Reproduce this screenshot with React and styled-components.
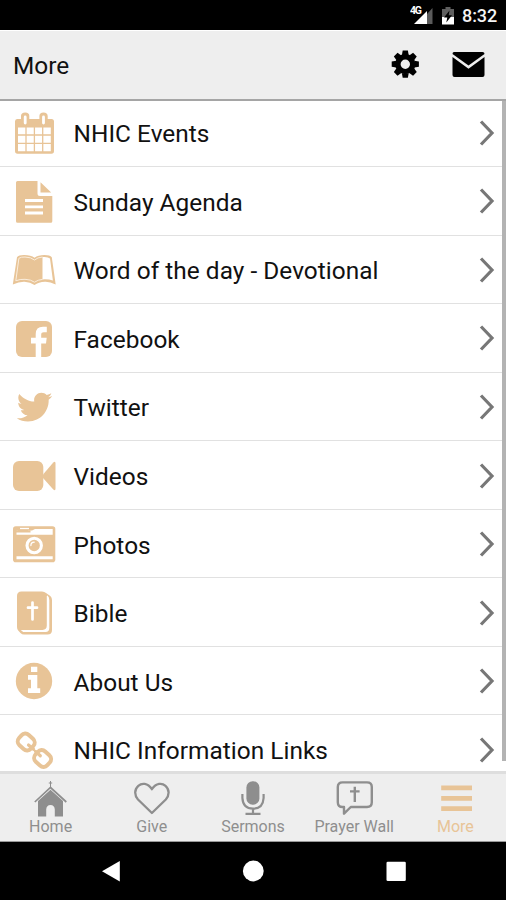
import React from "react";
import styled, { createGlobalStyle } from "styled-components";
import { FaTwitter } from "react-icons/fa";

const TAN = "#e8c497";
const GREY = "#8e8e8e";

const GlobalStyle = createGlobalStyle`
  *, *::before, *::after { box-sizing: border-box; }
  body { margin: 0; background: #000; font-family: Roboto, "Liberation Sans", sans-serif; }
`;

const Screen = styled.div`
  display: flex;
  flex-direction: column;
  height: 900px;
  overflow: hidden;
  background: #fff;
`;

const StatusBar = styled.div`
  display: flex;
  flex: none;
  align-items: center;
  justify-content: flex-end;
  height: 30px;
  padding: 2px 9px 0 0;
  background: #000;
`;

const StatusIcons = styled.svg`
  width: 50px;
  height: 28px;
  margin-right: 2px;
`;

const Clock = styled.span`
  width: 35px;
  color: #f4f4f4;
  font-size: 18px;
  font-weight: 500;
  letter-spacing: -0.1px;
  line-height: 28px;
  white-space: nowrap;
`;

const Header = styled.header`
  display: flex;
  flex: none;
  align-items: center;
  height: 70.5px;
  padding: 0 21px 0 13px;
  background: #eee;
  border-top: 1px solid #fff;
  border-bottom: 2px solid #a5a5a5;
`;

const Title = styled.h1`
  flex: 1;
  margin: 2px 0 0;
  color: #111;
  font-size: 24.4px;
  font-weight: 400;
`;

const HeaderIcon = styled.svg`
  width: ${(p) => p.$width}px;
  height: 30px;
  margin-top: -1px;
  margin-left: ${(p) => p.$gap || 0}px;
`;

const ListArea = styled.main`
  display: flex;
  flex: 1;
  min-height: 0;
  overflow: hidden;
`;

const List = styled.ul`
  flex: 1;
  margin: -2px 0 0;
  padding: 0;
  list-style: none;
`;

const Row = styled.li`
  display: flex;
  align-items: center;
  height: 68.56px;
  padding-right: 11px;
  border-bottom: 1.5px solid #e1e1e1;
`;

const RowIcon = styled.svg`
  flex: none;
  width: 73.5px;
  height: 68px;
  margin-top: 1.5px;
  color: ${TAN};
`;

const RowLabel = styled.span`
  flex: 1;
  padding-top: 3px;
  color: #111;
  font-size: 24.4px;
  letter-spacing: 0.04px;
  white-space: nowrap;
`;

const Chevron = styled.svg`
  flex: none;
  width: 16px;
  height: 28px;
  margin-top: 1px;
`;

const ScrollThumb = styled.div`
  width: 4px;
  height: 660px;
  margin-left: -4px;
  background: #b3b3b3;
  z-index: 1;
`;

const TabBar = styled.nav`
  display: grid;
  flex: none;
  grid-template-columns: repeat(5, 1fr);
  height: 71.5px;
  background: #eee;
  border-top: 3px solid #dedede;
  border-bottom: 1px solid #999;
`;

const Tab = styled.div`
  display: flex;
  flex-direction: column;
  align-items: center;
  padding-top: 4.5px;
  color: ${(p) => (p.$active ? TAN : GREY)};
`;

const TabIcon = styled.svg`
  width: 44px;
  height: 39px;
`;

const TabLabel = styled.span`
  font-size: 16px;
  line-height: 19px;
  white-space: nowrap;
`;

const SystemNav = styled.div`
  flex: none;
  height: 58px;
  background: #000;
`;

const SystemButtons = styled.svg`
  display: block;
  width: 506px;
  height: 58px;
`;

const CalendarGlyph = () => (
  <g>
    <path
      fill="currentColor"
      fillRule="evenodd"
      d="M17 20H21V17Q21 13.5 25.2 13.5T29.3 17V20H39.4V17Q39.4 13.5 43.5 13.5T47.7 17V20H51.5Q54 20 54 22.5V52Q54 54.8 51.5 54.8H17.5Q15 54.8 15 52V22.5Q15 20 17 20ZM18 28.5V52.2H50.8V28.5Z"
    />
    <path stroke="#fff" strokeWidth="2.8" strokeLinecap="round" d="M25.2 18V24M43.5 18V24" />
    <path stroke="currentColor" strokeWidth="1.3" d="M26 28V53M34.4 28V53M42.7 28V53M17 36H52M17 44.3H52" />
  </g>
);

const DocumentGlyph = () => (
  <g>
    <path
      fill="currentColor"
      d="M17.5 13H37.5V25.5Q37.5 28 40 28H52.3V53.2Q52.3 54.8 50.8 54.8H17.5Q16 54.8 16 53.2V14.5Q16 13 17.5 13ZM40.5 14.3L51.2 24.6H40.5Z"
    />
    <path stroke="#fff" strokeWidth="2.8" d="M25 32.5H43M25 38.8H43M25 45H43" />
  </g>
);

const BookGlyph = () => (
  <g>
    <path
      fill="currentColor"
      d="M17 21.2Q18.5 19 24 19Q31 19 34.5 21.8Q38 19 44.5 19Q50 19 51.8 21.2L55.7 48.5Q50 45.5 45 45.7Q38.5 46 34.5 49Q30.5 46 24.5 45.7Q19 45.5 12.8 48.5Z"
    />
    <path
      fill="none"
      stroke="#fbeedd"
      strokeWidth="1"
      d="M15.8 44.8L18.9 22.3Q21 20.8 25 21Q31 21.2 34.5 24Q37.5 21.4 42.5 21M15.8 44.8Q20 43 25 43.3Q31 43.5 34.5 46.2Q38 43.7 42.5 43.4"
    />
    <path fill="#fff" d="M42.5 21Q48 20.5 50 22.5L52.9 44.6Q48.5 43 42.5 43.4Z" />
  </g>
);

const FacebookGlyph = () => (
  <g>
    <rect x="16" y="16" width="36" height="36" rx="6" fill="currentColor" />
    <path fill="#fff" d="M35.7 52V38.4H31V32.8H35.7V29Q35.7 21.7 43 21.7H46.8V27.2H43.8Q41.2 27.2 41.2 29.6V32.8H46.7L46 38.4H41.2V52Z" />
  </g>
);

const TwitterGlyph = () => <FaTwitter x="16.8" y="16.3" size="35.5" />;

const VideoGlyph = () => (
  <g fill="currentColor">
    <rect x="13" y="19" width="30.3" height="30" rx="6" />
    <path d="M43 32.5L53.3 20.5Q55.5 18.7 55.5 21.5V46.5Q55.5 49.2 53.3 47.5L43 36Z" />
  </g>
);

const CameraGlyph = () => (
  <g>
    <rect x="13" y="16.2" width="42.3" height="36" rx="2.8" fill="currentColor" />
    <path fill="#fff" d="M16.5 22V20.6H32L35 19H52.7V24.8H16.5Z" />
    <path fill="currentColor" d="M16 22.5V20.2H18V18H28V20.2H30.5V22.5Z" />
    <path stroke="#fff" strokeWidth="1.3" d="M20 18.5H29" />
    <circle cx="34.2" cy="35.5" r="7.2" fill="none" stroke="#fff" strokeWidth="3.1" />
    <path d="M30.9 35.5Q30.9 32.2 34.2 32.2" fill="none" stroke="#fff" strokeWidth="1.3" strokeLinecap="round" />
    <path stroke="#fff" strokeWidth="3" d="M16.5 47.8H52.7" />
  </g>
);

const BibleGlyph = () => (
  <g>
    <path
      fill="currentColor"
      d="M21.5 12.5H42Q44.5 12.5 46 14L50.3 17Q52 18.5 52 21V51Q52 55.5 47.5 55.5H24Q22 55.5 20.5 54L18.2 51.5Q17 50.3 17 48V17Q17 12.5 21.5 12.5Z"
    />
    <path d="M47.6 16.5Q49.3 18 49.3 21V49Q49.3 53 45.5 53H23.2L20.8 50.9H42.5Q46.8 50.9 46.8 46.5V17Z" fill="#fff" />
    <path stroke="#fff" strokeWidth="2.7" strokeLinecap="round" d="M32.5 23.5V40.5M28 28.7H37" />
  </g>
);

const InfoGlyph = () => (
  <g>
    <circle cx="34" cy="34" r="18.2" fill="currentColor" />
    <path fill="#fff" d="M31 19.8H37.3V25H31ZM28 28H37.3V41.3H40.2V46H28V41.3H31V32.7H28Z" />
  </g>
);

const LinkGlyph = () => (
  <g fill="none" stroke="currentColor" strokeWidth="4">
    <rect x="-8" y="-7" width="16" height="14" rx="5.2" transform="translate(26.2 26) rotate(42)" />
    <rect x="-8" y="-7" width="16" height="14" rx="5.2" transform="translate(42.6 42.5) rotate(42)" />
    <path strokeWidth="3.2" strokeLinecap="round" d="M28.5 29L33.5 33.3M35.5 35.4L40.3 39.8" />
  </g>
);

const HomeGlyph = () => (
  <g>
    <path fill="none" stroke={GREY} strokeWidth="1.7" d="M5.8 24L21.5 9.5L37.3 24" />
    <path stroke={GREY} strokeWidth="1" d="M21.5 3V10M19.8 5H23.2" />
    <path fill={GREY} d="M21.5 11.8L34 23V38.5H25.8V31.5Q25.5 27 21.5 27T17.2 31.5V38.5H9V23Z" />
  </g>
);

const HeartGlyph = () => (
  <path
    fill="none"
    stroke={GREY}
    strokeWidth="2.3"
    strokeLinejoin="round"
    d="M21.9 11.2C17.5 4.8 11.8 4.8 8.3 7.8C4 11.6 4.4 17.3 8 21.5L21.9 35L35.8 21.5C39.4 17.3 39.8 11.6 35.5 7.8C32 4.8 26.3 4.8 21.9 11.2Z"
  />
);

const MicGlyph = () => (
  <g>
    <rect x="15.4" y="3.2" width="13" height="23.5" rx="6.3" fill={GREY} />
    <path fill="none" stroke={GREY} strokeWidth="2.2" d="M11.4 16V20Q12 30.7 22 30.7T32.6 20V16M22 31V36M14.5 35.8H29.5" />
  </g>
);

const PrayerGlyph = () => (
  <g fill="none" stroke={GREY} strokeWidth="2.4">
    <path strokeLinejoin="round" d="M10.5 4.4H35Q39.8 4.4 39.8 9V24.3Q39.8 29 35 29H18.8L12 35.7V29H10.5Q5.8 29 5.8 24.3V9Q5.8 4.4 10.5 4.4Z" />
    <path d="M22.8 8.8V24M18 13.4H27.6" />
  </g>
);

const MoreGlyph = () => <path stroke={TAN} strokeWidth="4.8" d="M8.2 9.8H39M8.2 20.3H39M8.2 30.7H39" />;

const rows = [
  ["NHIC Events", CalendarGlyph],
  ["Sunday Agenda", DocumentGlyph],
  ["Word of the day - Devotional", BookGlyph],
  ["Facebook", FacebookGlyph],
  ["Twitter", TwitterGlyph],
  ["Videos", VideoGlyph],
  ["Photos", CameraGlyph],
  ["Bible", BibleGlyph],
  ["About Us", InfoGlyph],
  ["NHIC Information Links", LinkGlyph],
];

const tabs = [
  ["Home", HomeGlyph],
  ["Give", HeartGlyph],
  ["Sermons", MicGlyph],
  ["Prayer Wall", PrayerGlyph],
  ["More", MoreGlyph],
];

const teeth = [0, 45, 90, 135, 180, 225, 270, 315];

export default function App() {
  return (
    <Screen>
      <GlobalStyle />
      <StatusBar>
        <StatusIcons viewBox="0 0 50 28">
          <path fill="#5b5b5b" d="M17 12L22.5 6V22H17Z" />
          <path fill="#fff" d="M4 22L17 9V22Z" />
          <text x="0" y="11.5" fill="#fff" fontSize="10.5" fontWeight="700" letterSpacing="-1.2">4G</text>
          <path fill="#5f5f5f" d="M32 7H35.5V5H40.5V7H44V16H32Z" />
          <path fill="#fff" d="M32 15H44V22.5H32Z" />
          <path fill="#000" d="M39.5 8.5L34 15.5H37.3L36.3 20.5L42 13.3H38.7Z" />
        </StatusIcons>
        <Clock>8:32</Clock>
      </StatusBar>
      <Header>
        <Title>More</Title>
        <HeaderIcon $width={30} viewBox="0 0 30 30">
          <g transform="translate(15.3 15.2)">
            {teeth.map((angle) => (
              <path key={angle} d="M-3.4 -9L-2.6 -13.6H2.6L3.4 -9Z" transform={`rotate(${angle})`} />
            ))}
            <circle r="7.4" fill="none" stroke="#000" strokeWidth="5.4" />
          </g>
        </HeaderIcon>
        <HeaderIcon $width={34} $gap={31} viewBox="0 0 34 30">
          <path d="M3 3H31.5Q33.5 3 33.5 5L17.5 16.5L1.5 5Q1.5 3 3 3Z" />
          <path d="M1.5 8L17.5 19.7L33.5 8V26Q33.5 28 31.5 28H3.5Q1.5 28 1.5 26Z" />
        </HeaderIcon>
      </Header>
      <ListArea>
        <List>
          {rows.map(([label, Glyph]) => (
            <Row key={label}>
              <RowIcon viewBox="0 0 73.5 68"><Glyph /></RowIcon>
              <RowLabel>{label}</RowLabel>
              <Chevron viewBox="0 0 16 28">
                <path fill="none" stroke="#777" strokeWidth="3.2" d="M2 2.5L13 14L2 25.5" />
              </Chevron>
            </Row>
          ))}
        </List>
        <ScrollThumb />
      </ListArea>
      <TabBar>
        {tabs.map(([label, Glyph]) => (
          <Tab key={label} $active={label === "More"}>
            <TabIcon viewBox="0 0 44 39"><Glyph /></TabIcon>
            <TabLabel>{label}</TabLabel>
          </Tab>
        ))}
      </TabBar>
      <SystemNav>
        <SystemButtons viewBox="0 0 506 58">
          <path fill="#fff" d="M102 29.2L119.8 19V39.5Z" />
          <circle cx="253.3" cy="29" r="10.4" fill="#fff" />
          <rect x="386.5" y="19.8" width="19.3" height="19.3" rx="1.3" fill="#fff" />
        </SystemButtons>
      </SystemNav>
    </Screen>
  );
}
